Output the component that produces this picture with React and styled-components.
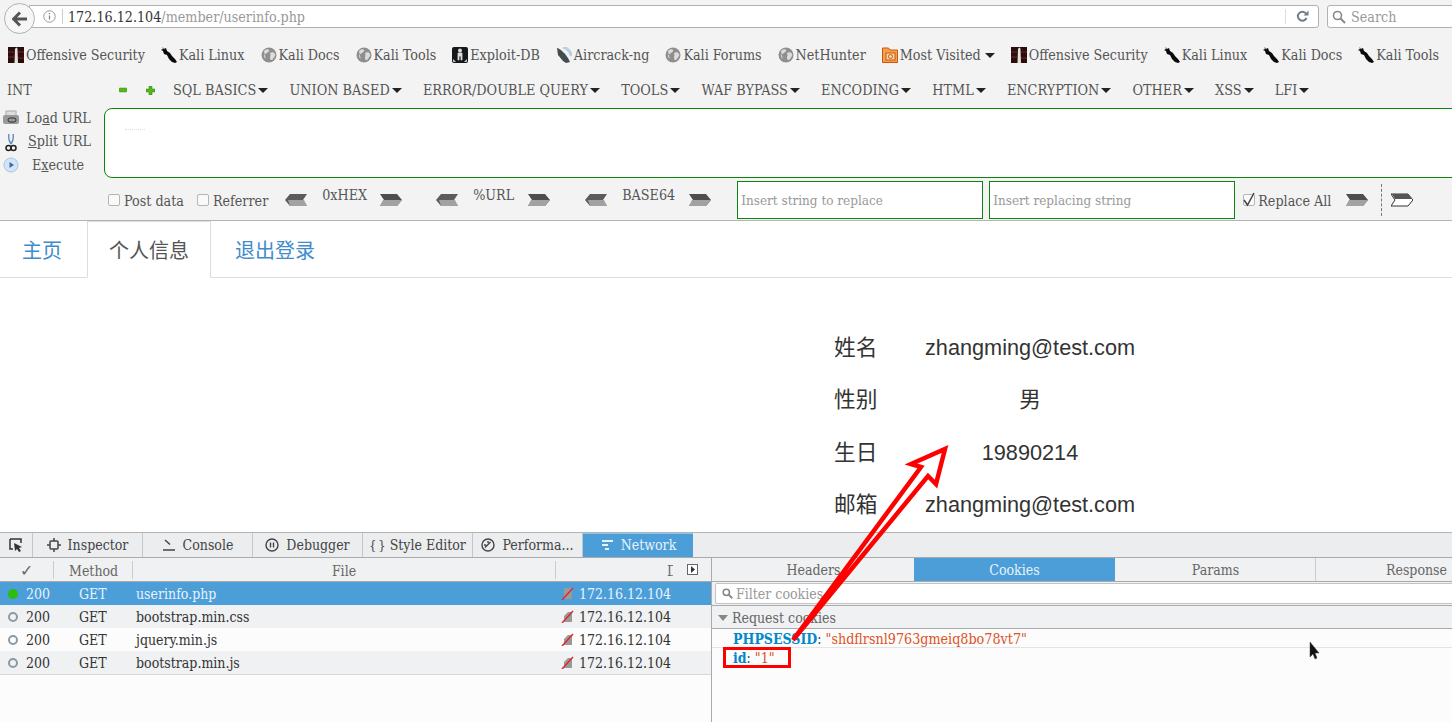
import React from "react";
import styled, { createGlobalStyle } from "styled-components";

const Global = createGlobalStyle`
  html, body { margin: 0; padding: 0; background: #fff; overflow: hidden; }
  * { box-sizing: border-box; }
  #root { width: 1452px; height: 722px; overflow: hidden; position: relative; }
`;
const serif = `"DejaVu Serif Condensed", "DejaVu Serif", serif`;
const sans = `"Liberation Sans", "Noto Sans CJK SC", sans-serif`;

const Page = styled.div`width:1452px;height:722px;display:flex;flex-direction:column;position:relative;overflow:hidden;font-family:${serif};`;
const Chrome = styled.div`height:221px;flex:none;background:#f3f3f3;border-bottom:1px solid #b4b4b4;display:flex;flex-direction:column;overflow:hidden;color:#555;font-size:14.2px;`;
const NavBar = styled.div`height:38px;flex:none;display:flex;align-items:flex-start;padding:3px 0 0 4px;`;
const BackButton = styled.div`width:31px;height:31px;border-radius:50%;flex:none;background:#f6f6f6;border:1px solid #b1b1b1;display:flex;align-items:center;justify-content:center;margin-right:-6px;position:relative;z-index:1;`;
const UrlBar = styled.div`margin-top:2px;width:1290px;height:23px;flex:none;background:#fff;border:1px solid #b1b1b1;border-radius:0 3px 3px 0;display:flex;align-items:center;padding-left:10px;color:#999;`;
const UrlHost = styled.span`color:#333;`;
const InfoDivider = styled.span`width:1px;height:15px;background:#ccc;margin:0 5px 0 6px;`;
const UrlSpacer = styled.span`flex:1;`;
const ReloadBox = styled.span`width:33px;height:15px;border-left:1px solid #ddd;display:flex;align-items:center;justify-content:center;`;
const SearchBox = styled.div`margin:2px 0 0 8px;width:140px;height:23px;flex:none;background:#fff;border:1px solid #b1b1b1;border-radius:3px 0 0 3px;display:flex;align-items:center;gap:5px;padding-left:4px;color:#999;`;
const Bookmarks = styled.div`height:34px;flex:none;display:flex;align-items:center;padding-left:8px;gap:16px;white-space:nowrap;`;
const Bookmark = styled.div`display:flex;align-items:center;gap:2px;`;
const Caret = styled.span`display:inline-block;width:0;height:0;border-left:5px solid transparent;border-right:5px solid transparent;border-top:5px solid #222;margin-left:2px;`;
const HackMenu = styled.div`height:36px;flex:none;display:flex;align-items:center;padding-left:7px;white-space:nowrap;`;
const IntLabel = styled.span`width:112px;`;
const MenuGlyphs = styled.div`display:flex;gap:19px;width:54px;align-items:center;`;
const MenuItems = styled.div`display:flex;gap:21.2px;font-size:14.3px;`;
const MenuItem = styled.div`display:flex;align-items:center;`;
const HackBody = styled.div`height:71px;flex:none;display:flex;`;
const Actions = styled.div`width:104px;flex:none;display:flex;flex-direction:column;margin-top:-2px;`;
const Action = styled.div`height:23.5px;flex:none;display:flex;align-items:center;padding-left:${p => p.$pad}px;position:relative;`;
const ActionIcon = styled.span`position:absolute;left:3px;top:4px;display:flex;`;
const Under = styled.span`text-decoration:underline;`;
const UrlArea = styled.div`flex:1;margin-right:-20px;height:70px;background:#fff;border:1px solid #0a840a;border-radius:8px;position:relative;`;
const Smudge = styled.span`position:absolute;left:20px;top:20px;width:20px;border-top:1px dotted #ddd;`;
const Options = styled.div`flex:1;display:flex;align-items:center;padding-left:108px;white-space:nowrap;position:relative;`;
const Check = styled.span`width:12px;height:12px;flex:none;background:#fafafa;border:1px solid #b5b5b5;border-radius:2px;display:inline-flex;align-items:center;justify-content:center;`;
const OptLabel = styled.span`margin-left:${p => p.$ml}px;margin-right:${p => p.$mr}px;padding-top:2px;`;
const Encoder = styled.span`margin:0 13px 0 15px;width:${p => p.$w}px;position:relative;top:-5px;`;
const ArrowGap = styled.span`width:${p => p.$w}px;flex:none;`;
const ReplaceInput = styled.div`width:246px;height:38px;flex:none;background:#fff;border:1px solid #0a840a;color:#999;font-size:13.4px;padding:1px 0 0 3px;display:flex;align-items:center;margin-right:6px;`;
const Dotted = styled.span`height:32px;border-left:1px dashed #777;margin:0 9px 0 13px;`;

const TabBar = styled.div`height:57px;flex:none;border-bottom:1px solid #ddd;display:flex;align-items:flex-end;font-family:${sans};font-size:20px;`;
const Tab = styled.div`height:${p => p.$active ? 57 : 56}px;padding:0 22px;display:flex;align-items:center;color:${p => p.$active ? "#555" : "#428bca"};margin-right:${p => p.$mr ?? 2}px;background:#fff;margin-bottom:${p => p.$active ? -1 : 0}px;${p => p.$active ? "border:1px solid #ddd;border-bottom-color:#fff;padding:0 21px;" : ""}`;
const Info = styled.div`flex:1;min-height:0;display:flex;flex-direction:column;padding:43.5px 0 0 834px;font-family:${sans};font-size:21.7px;color:#333;`;
const InfoRow = styled.div`height:52.5px;flex:none;display:flex;line-height:52.5px;`;
const InfoLabel = styled.span`width:91px;flex:none;`;
const InfoValue = styled.span`width:210px;text-align:center;white-space:nowrap;`;

const DevTools = styled.div`height:190px;flex:none;border-top:1px solid #b4b4b4;display:flex;flex-direction:column;font-family:${serif};font-size:14px;color:#444;background:#fcfcfc;`;
const DevToolbar = styled.div`height:25px;flex:none;background:#ebedef;border-bottom:1px solid #aaa;display:flex;`;
const PickTab = styled.div`width:33px;border-right:1px solid #c4c6c8;display:flex;align-items:center;justify-content:center;`;
const DevTab = styled.div`width:110px;flex:none;display:flex;align-items:center;justify-content:center;gap:${p => p.$gap ?? 7}px;white-space:nowrap;border-right:1px solid #c4c6c8;${p => p.$active ? "background:#4c9ed9;color:#e8f2fa;box-shadow:inset 0 1px 0 #8cc6ee;border-right:0;" : ""}`;
const Braces = styled.span`font-size:13px;letter-spacing:-1px;`;
const Panels = styled.div`flex:1;display:flex;min-height:0;`;
const Requests = styled.div`width:712px;flex:none;border-right:1px solid #aaa;`;
const ReqHead = styled.div`height:24px;background:#f0f1f2;border-bottom:1px solid #aaa;display:grid;grid-template-columns:54px 79px 423px 1fr;align-items:center;color:#666;`;
const HeadCell = styled.div`height:18px;display:flex;align-items:center;justify-content:${p => p.$pad !== undefined ? "flex-start" : "center"};padding-left:${p => p.$pad ?? 0}px;padding-top:2px;border-right:${p => p.$last ? 0 : 1}px solid #ccc;position:relative;`;
const CheckMark = styled.span`font-size:16px;`;
const ClippedD = styled.span`width:6px;overflow:hidden;`;
const Split = styled.span`position:absolute;left:131px;top:3px;width:11px;height:11px;border:1px solid #666;background:#fff;display:flex;align-items:center;justify-content:center;`;
const Row = styled.div`height:23px;display:flex;align-items:center;white-space:nowrap;background:${p => p.$sel ? "#4c9ed9" : p.$i % 2 ? "#f0f1f2" : "#fcfcfc"};color:${p => p.$sel ? "#e8f2fa" : "#333"};${p => p.$i === 3 ? "border-bottom:1px solid #d8d8d8;height:24px;" : ""}`;
const Dot = styled.span`width:10px;height:10px;border-radius:50%;margin-left:8px;flex:none;${p => p.$sel ? "background:#2cbb0f;" : "border:2px solid #8a9ba8;"}`;
const Status = styled.span`width:61px;flex:none;padding-left:8px;`;
const Cell = styled.span`width:${p => p.$w}px;flex:none;`;
const Lock = styled.span`width:18px;flex:none;display:flex;`;
const Details = styled.div`flex:1;min-width:0;overflow:hidden;`;
const DetailTabs = styled.div`height:24px;background:#f0f1f2;border-bottom:1px solid #aaa;display:flex;padding-left:1px;color:#666;`;
const DetailTab = styled.div`width:201px;flex:none;display:flex;align-items:center;justify-content:center;${p => p.$active ? "background:#4c9ed9;color:#e8f2fa;" : ""}${p => p.$sep ? "box-shadow:inset -1px 0 0 #ccc;" : ""}`;
const Filter = styled.div`height:24px;background:#f0f1f2;border-bottom:1px solid #aaa;padding:1px 0 1px 3px;`;
const FilterBox = styled.div`height:21px;width:760px;background:#fff;border:1px solid #c4c4c4;border-radius:2px;display:flex;align-items:center;padding-left:6px;gap:3px;color:#999;`;
const CookieHead = styled.div`height:23px;background:#f0f1f2;border-bottom:1px solid #aaa;display:flex;align-items:center;padding:1px 0 0 6px;gap:4px;color:#666;`;
const Tri = styled.span`width:0;height:0;border-left:5px solid transparent;border-right:5px solid transparent;border-top:6px solid #888;`;
const CookieRow = styled.div`height:19px;display:flex;align-items:center;padding:1px 0 0 21px;${p => p.$line ? "border-bottom:1px solid #e4e4e4;" : ""}white-space:pre;`;
const CookieKey = styled.b`color:#0088cc;font-weight:700;`;
const CookieValue = styled.span`color:#dd5226;font-size:14.2px;`;

const Overlay = styled.svg`position:absolute;left:0;top:0;pointer-events:none;z-index:5;`;
const Highlight = styled.div`position:absolute;left:723px;top:647px;width:68px;height:21px;border:3px solid #f00;z-index:5;`;

const Globe = () => (
  <svg width="16" height="16" viewBox="0 0 16 16"><circle cx="8" cy="8" r="7.500" fill="#8f8f8f"/><path d="M3 4c2-2 4-2 5-1s-1 2-2 3-3 1-3 3 2 2 2 4M9 6c2-1 4-1 5 1s-1 3-2 5-3 1-3-1 1-2 0-5z" fill="#dcdcdc"/></svg>
);
const Kali = () => (
  <svg width="16" height="16" viewBox="0 0 16 16"><path d="M1 0l2 2 2-1 1 3 3 2 2 3 3 3 2 3-2 1-3-1-3-3-2-4-3-1-1-3-2-1 2-1z" fill="#0a0a0a"/><path d="M2 1l2 1" stroke="#888" strokeWidth=".7"/></svg>
);
const Offsec = () => (
  <svg width="16" height="16" viewBox="0 0 16 16"><rect width="16" height="16" fill="#2a0d0d"/><path d="M7 2c1-2 2-2 2.500 0l.5 14H6.500z" fill="#e8e0dc"/><path d="M0 5h6M0 10h6M10 5h6M10 11h6" stroke="#6b2a2a"/></svg>
);
const ExploitDb = () => (
  <svg width="16" height="16" viewBox="0 0 16 16"><rect width="16" height="16" rx="2" fill="#14181c"/><circle cx="8" cy="3.500" r="2" fill="#ddd"/><path d="M6 6h4v7H9V9H7v4H6zM1.500 12.500v2h2M14.500 12.500v2h-2" fill="#ddd" stroke="#ddd" strokeWidth=".8"/></svg>
);
const Dish = () => (
  <svg width="16" height="16" viewBox="0 0 16 16"><path d="M1 1c2 0 9 5 13 14l-4 1-3-2-5-6z" fill="#434c50"/><path d="M7 0c4 1 7 4 8.500 9" stroke="#b9cfe6" strokeWidth="3" fill="none"/></svg>
);
const FolderIcon = () => (
  <svg width="16" height="16" viewBox="0 0 16 16"><path d="M.5 1h6L8 3h7.500v12.500H.5z" fill="#f6a04a" stroke="#c9570c"/><rect x="4" y="6" width="9" height="7" fill="#fbd7ae" stroke="#c9570c"/><circle cx="8.500" cy="9.500" r="2" fill="none" stroke="#c9570c"/></svg>
);
const LEFT = "M5 1h17l-4 6 4 6H5L0 7z";
const RIGHT = "M0 1h17l5 6-5 6H0l4-6z";
const Back = () => (
  <svg width="22" height="14" viewBox="0 0 22 14" style={{ flex: "none" }}><path d={LEFT} fill="#5c5c5c"/><path d="M3 7h16l3 6H5z" fill="#a2a2a2"/></svg>
);
const Next = () => (
  <svg width="22" height="14" viewBox="0 0 22 14" style={{ flex: "none" }}><path d={RIGHT} fill="#4e4e4e"/><path d="M3 7h19l-5 6H0z" fill="#a2a2a2"/></svg>
);
const NextLast = () => (
  <svg width="22" height="14" viewBox="0 0 22 14" style={{ flex: "none" }}><path d={RIGHT} fill="#fff" stroke="#333"/><path d="M1 1h16l4 5H4z" fill="#555"/></svg>
);
const Slash = ({ $sel }) => (
  <svg width="13" height="13" viewBox="0 0 13 13">
    <path d={$sel ? "M3 1h8v11H3z" : "M3 12V6l4-4h4v10z"} fill="#9a9a9a"/>
    <path d="M1 13 12 1" stroke="#e0282e" strokeWidth="1.500"/>
  </svg>
);

const marks = [
  [Offsec, "Offensive Security"], [Kali, "Kali Linux"], [Globe, "Kali Docs"], [Globe, "Kali Tools"],
  [ExploitDb, "Exploit-DB"], [Dish, "Aircrack-ng"], [Globe, "Kali Forums"], [Globe, "NetHunter"],
  [FolderIcon, "Most Visited", true], [Offsec, "Offensive Security"], [Kali, "Kali Linux"], [Kali, "Kali Docs"], [Kali, "Kali Tools"],
];
const menus = ["SQL BASICS", "UNION BASED", "ERROR/DOUBLE QUERY", "TOOLS", "WAF BYPASS", "ENCODING", "HTML", "ENCRYPTION", "OTHER", "XSS", "LFI"];
const rows = ["userinfo.php", "bootstrap.min.css", "jquery.min.js", "bootstrap.min.js"];
const info = [["姓名", "zhangming@test.com"], ["性别", "男"], ["生日", "19890214"], ["邮箱", "zhangming@test.com"]];

export default function App() {
  return (
    <Page>
      <Global />
      <Chrome>
        <NavBar>
          <BackButton>
            <svg width="16" height="16" viewBox="0 0 16 16"><path d="M8 1.500 1.500 8 8 14.500M2 8h13" fill="none" stroke="#555" strokeWidth="3"/></svg>
          </BackButton>
          <UrlBar>
            <svg width="13" height="13" viewBox="0 0 13 13" style={{ marginLeft: 3 }}><circle cx="6.500" cy="6.500" r="5.700" fill="none" stroke="#999"/><path d="M6.500 5.500v4M6.500 3v1.300" stroke="#888" strokeWidth="1.300"/></svg>
            <InfoDivider />
            <UrlHost>172.16.12.104</UrlHost>/member/userinfo.php
            <UrlSpacer />
            <ReloadBox>
              <svg width="13" height="13" viewBox="0 0 13 13"><path d="M10.500 8A4.500 4.500 0 1 1 10 3.500" fill="none" stroke="#6f7f8c" strokeWidth="2"/><path d="M7.500 5.500h5V.5z" fill="#6f7f8c"/></svg>
            </ReloadBox>
          </UrlBar>
          <SearchBox>
            <svg width="14" height="14" viewBox="0 0 14 14"><circle cx="5.500" cy="5.500" r="4" fill="none" stroke="#888" strokeWidth="1.600"/><path d="M8.500 8.500 13 13" stroke="#888" strokeWidth="2"/></svg>
            Search
          </SearchBox>
        </NavBar>
        <Bookmarks>
          {marks.map(([Icon, label, caret], i) => (
            <Bookmark key={i}><Icon /><span>{label}</span>{caret && <Caret />}</Bookmark>
          ))}
        </Bookmarks>
        <HackMenu>
          <IntLabel>INT</IntLabel>
          <MenuGlyphs>
            <svg width="8" height="8" viewBox="0 0 8 8"><rect y="2" width="8" height="4" rx="1" fill="#52b81c" stroke="#3a8c10" strokeWidth=".5"/></svg>
            <svg width="9" height="9" viewBox="0 0 9 9"><path d="M3 0h3v3h3v3H6v3H3V6H0V3h3z" fill="#52b81c" stroke="#2f7d0c" strokeWidth=".5"/></svg>
          </MenuGlyphs>
          <MenuItems>
            {menus.map(m => <MenuItem key={m}>{m}<Caret /></MenuItem>)}
          </MenuItems>
        </HackMenu>
        <HackBody>
          <Actions>
            <Action $pad={26}>
              <ActionIcon><svg width="16" height="15" viewBox="0 0 16 15"><rect x="3" y="1" width="10" height="6" fill="#ddd" stroke="#aaa"/><rect x="0" y="5" width="16" height="9" rx="2" fill="#9a9a9a"/><rect x="5" y="8" width="8" height="4" rx="2" fill="none" stroke="#333"/></svg></ActionIcon>
              Lo<Under>a</Under>d URL
            </Action>
            <Action $pad={28}>
              <ActionIcon><svg width="14" height="18" viewBox="0 0 14 18" style={{ marginLeft: 1 }}><path d="M5 0c-1 4 0 7 2 10M9 0c1 4 0 7-2 10" stroke="#6d8fc0" strokeWidth="1.500" fill="none"/><circle cx="4.500" cy="14" r="2.500" fill="none" stroke="#222" strokeWidth="1.500"/><circle cx="9.500" cy="14" r="2.500" fill="none" stroke="#222" strokeWidth="1.500"/></svg></ActionIcon>
              <Under>S</Under>plit URL
            </Action>
            <Action $pad={32}>
              <ActionIcon><svg width="16" height="16" viewBox="0 0 16 16"><circle cx="8" cy="8" r="7" fill="#d4e4f6" stroke="#a8c4e4"/><path d="M6.500 5v6L11 8z" fill="#3a6ea8"/></svg></ActionIcon>
              E<Under>x</Under>ecute
            </Action>
          </Actions>
          <UrlArea><Smudge /></UrlArea>
        </HackBody>
        <Options>
          <Check />
          <OptLabel $ml={4} $mr={13}>Post data</OptLabel>
          <Check />
          <OptLabel $ml={4} $mr={17}>Referrer</OptLabel>
          <Back /><Encoder $w={45}>0xHEX</Encoder><Next /><ArrowGap $w={34} />
          <Back /><Encoder $w={42}>%URL</Encoder><Next /><ArrowGap $w={35} />
          <Back /><Encoder $w={54}>BASE64</Encoder><Next /><ArrowGap $w={26} />
          <ReplaceInput>Insert string to replace</ReplaceInput>
          <ReplaceInput>Insert replacing string</ReplaceInput>
          <ArrowGap $w={2} />
          <Check><svg width="12" height="12" viewBox="0 0 12 12" style={{ overflow: "visible" }}><path d="M1 6l3.500 5L11-1" fill="none" stroke="#444" strokeWidth="1.500"/></svg></Check>
          <OptLabel $ml={3} $mr={15}>Replace All</OptLabel>
          <Next />
          <Dotted />
          <NextLast />
        </Options>
      </Chrome>
      <TabBar>
        <Tab $mr={3}>主页</Tab>
        <Tab $active>个人信息</Tab>
        <Tab>退出登录</Tab>
      </TabBar>
      <Info>
        {info.map(([k, v]) => (
          <InfoRow key={k}><InfoLabel>{k}</InfoLabel><InfoValue>{v}</InfoValue></InfoRow>
        ))}
      </Info>
      <DevTools>
        <DevToolbar>
          <PickTab>
            <svg width="14" height="14" viewBox="0 0 14 14"><path d="M1 1h11v4M1 1v10h3" fill="none" stroke="#333" strokeWidth="1.500"/><path d="M5 5l8 4-3 1 2 3-2 1-2-3-2 2z" fill="#333"/></svg>
          </PickTab>
          <DevTab>
            <svg width="14" height="14" viewBox="0 0 14 14"><rect x="3" y="3" width="8" height="8" rx="1" fill="none" stroke="#444" strokeWidth="1.500"/><path d="M7 0v3M7 11v3M0 7h3M11 7h3" stroke="#444" strokeWidth="1.500"/></svg>
            Inspector
          </DevTab>
          <DevTab>
            <svg width="14" height="14" viewBox="0 0 14 14"><path d="M3 2l5 4.500M1 12h12" fill="none" stroke="#444" strokeWidth="1.500"/></svg>
            Console
          </DevTab>
          <DevTab>
            <svg width="14" height="14" viewBox="0 0 14 14"><circle cx="7" cy="7" r="6" fill="none" stroke="#444" strokeWidth="1.400"/><path d="M5.500 4.500v5M8.500 4.500v5" stroke="#444" strokeWidth="1.400"/></svg>
            Debugger
          </DevTab>
          <DevTab $gap={5}>
            <Braces>{"{ }"}</Braces>
            Style Editor
          </DevTab>
          <DevTab>
            <svg width="14" height="14" viewBox="0 0 14 14"><circle cx="7" cy="7" r="6" fill="none" stroke="#444" strokeWidth="1.400"/><path d="M4 9.500 9.500 4M3 7h2M7 3v2" stroke="#444" strokeWidth="1.400"/></svg>
            Performa...
          </DevTab>
          <DevTab $active>
            <svg width="14" height="12" viewBox="0 0 14 12"><path d="M2 2h11M2 6h6M5 10h4" stroke="#e8f2fa" strokeWidth="2"/></svg>
            Network
          </DevTab>
        </DevToolbar>
        <Panels>
          <Requests>
            <ReqHead>
              <HeadCell><CheckMark>✓</CheckMark></HeadCell>
              <HeadCell $pad={15}>Method</HeadCell>
              <HeadCell>File</HeadCell>
              <HeadCell $last $pad={111}>
                <ClippedD>D</ClippedD>
                <Split><svg width="9" height="9" viewBox="0 0 9 9"><path d="M3 1l4 3.500L3 8z" fill="#333"/></svg></Split>
              </HeadCell>
            </ReqHead>
            {rows.map((f, i) => (
              <Row key={f} $sel={i === 0} $i={i}>
                <Dot $sel={i === 0} />
                <Status>200</Status>
                <Cell $w={57}>GET</Cell>
                <Cell $w={425}>{f}</Cell>
                <Lock><Slash $sel={i === 0} /></Lock>
                172.16.12.104
              </Row>
            ))}
          </Requests>
          <Details>
            <DetailTabs>
              <DetailTab>Headers</DetailTab>
              <DetailTab $active>Cookies</DetailTab>
              <DetailTab $sep>Params</DetailTab>
              <DetailTab>Response</DetailTab>
            </DetailTabs>
            <Filter>
              <FilterBox>
                <svg width="11" height="11" viewBox="0 0 14 14"><circle cx="5.500" cy="5.500" r="4" fill="none" stroke="#888" strokeWidth="2"/><path d="M8.500 8.500 13 13" stroke="#888" strokeWidth="2.500"/></svg>
                Filter cookies
              </FilterBox>
            </Filter>
            <CookieHead><Tri />Request cookies</CookieHead>
            <CookieRow $line><CookieKey>PHPSESSID</CookieKey>: <CookieValue>"shdflrsnl9763gmeiq8bo78vt7"</CookieValue></CookieRow>
            <CookieRow><CookieKey>id</CookieKey>: <CookieValue>"1"</CookieValue></CookieRow>
          </Details>
        </Panels>
      </DevTools>
      <Highlight />
      <Overlay width="1452" height="722" viewBox="0 0 1452 722">
        <path d="M793 640 921 467 911 464 945 449 936 484 928 476Z" fill="none" stroke="#f00" strokeWidth="4.500" strokeLinejoin="miter"/>
        <path d="M1310 642v15l3-3 2 5 2-1-2-5h4z" fill="#111" stroke="#444" strokeWidth=".5"/>
      </Overlay>
    </Page>
  );
}
